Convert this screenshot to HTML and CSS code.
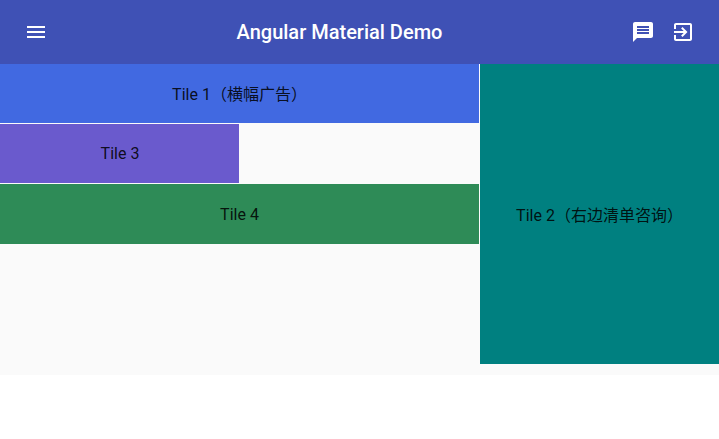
FILE: index.html
```html
<!DOCTYPE html>
<html lang="zh-CN">
<head>
<meta charset="utf-8">
<title>Angular Material Demo</title>
<link rel="stylesheet" href="styles.css">
</head>
<body>
<div class="container">
  <header class="toolbar">
    <button class="icon-button" aria-label="Menu"><svg viewBox="0 0 24 24"><path d="M3 18h18v-2H3v2zm0-5h18v-2H3v2zm0-7v2h18V6H3z"/></svg></button>
    <h1 class="title">Angular Material Demo</h1>
    <div class="actions">
      <button class="icon-button" aria-label="Messages"><svg viewBox="0 0 24 24"><path d="M20 2H4c-1.1 0-1.99.9-1.99 2L2 22l4-4h14c1.1 0 2-.9 2-2V4c0-1.100-.9-2-2-2zm-2 12H6v-2h12v2zm0-3H6V9h12v2zm0-3H6V6h12v2z"/></svg></button>
      <button class="icon-button" aria-label="Exit"><svg viewBox="0 0 24 24"><path d="M10.090 15.590L11.500 17l5-5-5-5-1.410 1.410L12.670 11H3v2h9.670l-2.580 2.590zM19 3H5c-1.110 0-2 .9-2 2v4h2V5h14v14H5v-4H3v4c0 1.100.89 2 2 2h14c1.100 0 2-.9 2-2V5c0-1.100-.9-2-2-2z"/></svg></button>
    </div>
  </header>
  <main class="tiles">
    <div class="tile banner">Tile 1（横幅广告）</div>
    <div class="tile sidebar">Tile 2（右边清单咨询）</div>
    <div class="tile small">Tile 3</div>
    <div class="tile wide">Tile 4</div>
  </main>
</div>
</body>
</html>
```

FILE: styles.css
```css
body {
  margin: 0;
  background: #fff;
  font: 400 16px/24px Roboto, "Noto Sans CJK SC", sans-serif;
  color: rgba(0, 0, 0, 0.87);
}

.container {
  height: 375px;
  background: #fafafa;
}

.toolbar {
  display: flex;
  align-items: center;
  box-sizing: border-box;
  height: 64px;
  padding: 0 16px;
  background: #3f51b5;
  color: #fff;
}

.title {
  flex: 1;
  margin: 0;
  text-align: center;
  font-size: 20px;
  font-weight: 500;
  line-height: 32px;
}

.actions {
  display: flex;
}

.icon-button {
  display: flex;
  align-items: center;
  justify-content: center;
  width: 40px;
  height: 40px;
  padding: 0;
  border: 0;
  background: transparent;
  color: inherit;
}

.icon-button svg {
  width: 24px;
  height: 24px;
  fill: currentColor;
}

.tiles {
  display: grid;
  grid-template-columns: 239px 239px 1fr;
  grid-template-rows: 59px 59px 60px 59px 59px;
  gap: 1px;
}

.tile {
  display: flex;
  align-items: center;
  justify-content: center;
}

.banner {
  grid-column: 1 / 3;
  padding-top: 2px;
  background: royalblue;
}

.sidebar {
  grid-column: 3;
  grid-row: 1 / 6;
  padding-top: 4px;
  background: teal;
}

.small {
  grid-column: 1;
  padding-left: 1px;
  background: slateblue;
}

.wide {
  grid-column: 1 / 3;
  padding-top: 2px;
  background: seagreen;
}
```
